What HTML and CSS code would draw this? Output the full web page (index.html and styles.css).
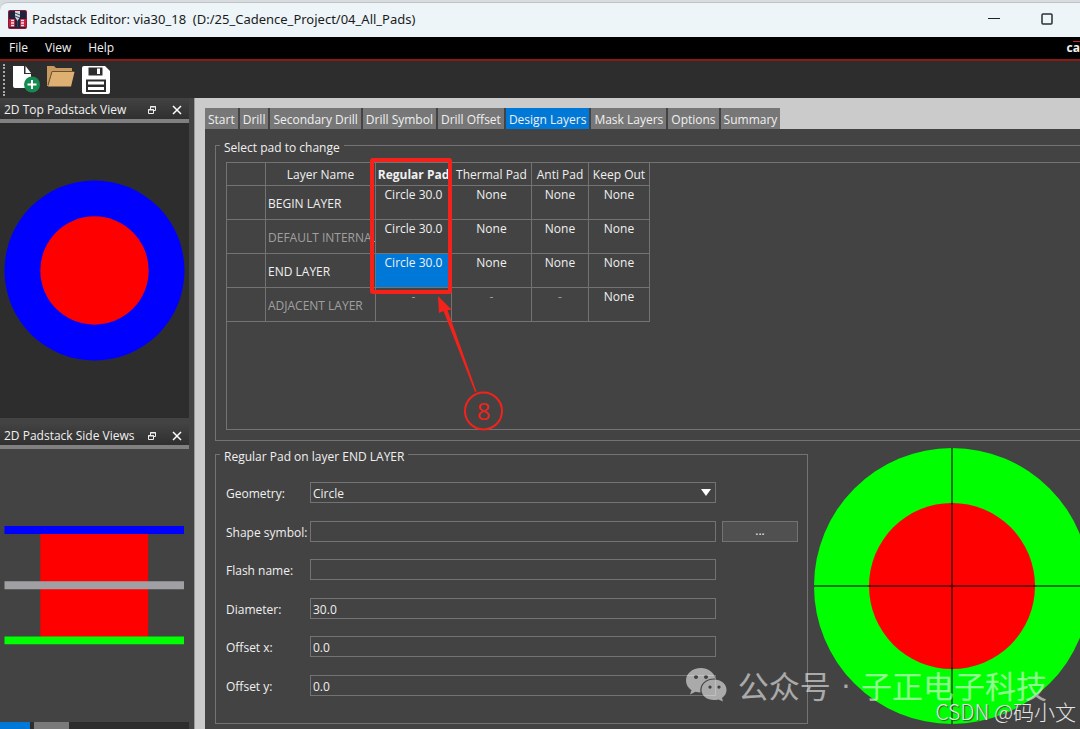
FILE: index.html
```html
<!DOCTYPE html>
<html lang="en">
<head>
  <meta charset="utf-8">
  <title>Padstack Editor</title>
  <link rel="stylesheet" href="styles.css">
</head>
<body>
  <div class="window">
    <header class="titlebar">
      <svg class="app-icon" width="19" height="19" viewBox="0 0 19 19">
        <rect width="19" height="19" rx="2" fill="#8d1c36"/>
        <rect x="1" y="1" width="17" height="17" rx="1" fill="#1c2440"/>
        <path d="M1 9h6v8H1zM12 9h6v8h-6z" fill="#c81e3c"/>
        <path d="M3 10.500h3M3 13h3M3 15.500h3M13 10.500h3M13 13h3M13 15.500h3" stroke="#f4e6ea" stroke-width="1.300"/>
        <path d="M7 1h5v6l-2.500 4L7 7z" fill="#cfd4da"/>
        <path d="M7 3l5 2M7 6l5 2M9.500 11v6" stroke="#3b4358"/>
      </svg>
      <h1>Padstack Editor: via30_18&nbsp; (D:/25_Cadence_Project/04_All_Pads)</h1>
      <div class="window-buttons">
        <button aria-label="Minimize"><svg width="12" height="12" viewBox="0 0 12 12"><path d="M0 5.500h12" stroke="#222"/></svg></button>
        <button aria-label="Maximize"><svg width="12" height="12" viewBox="0 0 12 12"><rect x="1" y="1" width="10" height="10" rx="1" fill="none" stroke="#2b2f36" stroke-width="1.500"/></svg></button>
      </div>
    </header>

    <nav class="menubar">
      <a href="#">File</a>
      <a href="#">View</a>
      <a href="#">Help</a>
      <span class="brand">c<span class="macron">a</span></span>
    </nav>

    <div class="toolbar">
      <span class="grip"></span>
      <button aria-label="New">
        <svg width="28" height="28" viewBox="0 0 28 28">
          <path d="M1 0h11v8h7v14H3q-2 0-2-2z" fill="#fff"/>
          <path d="M13.500 0l5.500 7h-5.500z" fill="#fff"/>
          <circle cx="20" cy="18.500" r="8" fill="#168a50"/>
          <path d="M20 14v9M15.500 18.500h9" stroke="#fff" stroke-width="2"/>
        </svg>
      </button>
      <button aria-label="Open">
        <svg width="28" height="28" viewBox="0 0 28 28">
          <path d="M0 20V0h7l2 2h16v4H5L1 20z" fill="#c99a5e"/>
          <path d="M5 6h22.500L24 20.500H1z" fill="#deb173"/>
          <path d="M1 19L5 5.500h22" fill="none" stroke="#6d5333"/>
        </svg>
      </button>
      <button aria-label="Save">
        <svg width="28" height="28" viewBox="0 0 28 28">
          <path d="M2 0h21l5 5v21q0 2-2 2H2q-2 0-2-2V2q0-2 2-2z" fill="#fff"/>
          <path d="M6.500 1.500h14v8h-14z" fill="#2d2d2d"/>
          <path d="M15 2.500h3v5.500h-3z" fill="#fff"/>
          <path d="M4 13.500h20V26H4z" fill="#2d2d2d"/>
          <path d="M6 15.500h16v3H6zM6 21h16v3H6z" fill="#fff"/>
        </svg>
      </button>
    </div>

    <div class="workspace">
      <aside class="docks">
        <section class="dock top-dock">
          <div class="dock-title">
            <h2>2D Top Padstack View</h2>
            <button aria-label="Float top view"><svg width="10" height="10" viewBox="0 0 10 10"><path d="M3.500 5V1.500h5v4H6M3 2h6M1.500 4.500h5v4h-5zM1 5h6" fill="none" stroke="#eee"/></svg></button>
            <button aria-label="Close top view"><svg width="10" height="10" viewBox="0 0 10 10"><path d="M1 1l8 8M9 1L1 9" stroke="#fff" stroke-width="1.500"/></svg></button>
          </div>
          <div class="dock-view dark">
            <svg viewBox="0 0 182 182">
              <circle cx="91" cy="91" r="90.500" fill="#00f"/>
              <circle cx="91" cy="91" r="54.500" fill="#f00"/>
            </svg>
          </div>
        </section>
        <section class="dock side-dock">
          <div class="dock-title">
            <h2>2D Padstack Side Views</h2>
            <button aria-label="Float side views"><svg width="10" height="10" viewBox="0 0 10 10"><path d="M3.500 5V1.500h5v4H6M3 2h6M1.500 4.500h5v4h-5zM1 5h6" fill="none" stroke="#eee"/></svg></button>
            <button aria-label="Close side views"><svg width="10" height="10" viewBox="0 0 10 10"><path d="M1 1l8 8M9 1L1 9" stroke="#fff" stroke-width="1.500"/></svg></button>
          </div>
          <div class="dock-view">
            <svg viewBox="0 0 182 120">
              <path d="M36.500 8h108.500v104H36.500z" fill="#f00"/>
              <path d="M.5 0H181v8H.5z" fill="#00f"/>
              <path d="M.5 55.500H181v8H.5z" fill="#a0a0a4"/>
              <path d="M.5 111H181v8H.5z" fill="#0f0"/>
            </svg>
          </div>
        </section>
        <div class="dock-tabs"><span class="on"></span><span></span></div>
      </aside>

      <main class="editor">
        <div class="tabs">
          <button>Start</button>
          <button>Drill</button>
          <button>Secondary Drill</button>
          <button>Drill Symbol</button>
          <button>Drill Offset</button>
          <button class="active">Design Layers</button>
          <button>Mask Layers</button>
          <button>Options</button>
          <button>Summary</button>
        </div>

        <div class="page">
          <fieldset class="group pads">
            <legend>Select pad to change</legend>
            <div class="pad-frame">
              <table>
                <colgroup>
                  <col class="c-mark"><col class="c-name"><col class="c-regular"><col class="c-thermal"><col class="c-anti"><col class="c-keep">
                </colgroup>
                <thead>
                  <tr><th></th><th>Layer Name</th><th class="current">Regular Pad</th><th>Thermal Pad</th><th>Anti Pad</th><th>Keep Out</th></tr>
                </thead>
                <tbody>
                  <tr><td></td><td class="name">BEGIN LAYER</td><td>Circle 30.0</td><td>None</td><td>None</td><td>None</td></tr>
                  <tr><td></td><td class="name dim">DEFAULT INTERNAL</td><td>Circle 30.0</td><td>None</td><td>None</td><td>None</td></tr>
                  <tr><td></td><td class="name">END LAYER</td><td class="selected">Circle 30.0</td><td>None</td><td>None</td><td>None</td></tr>
                  <tr><td></td><td class="name dim">ADJACENT LAYER</td><td class="dim">-</td><td class="dim">-</td><td class="dim">-</td><td>None</td></tr>
                </tbody>
              </table>
              <!-- step marker drawn over the table -->
              <svg class="callout" width="136" height="274" viewBox="0 0 136 274">
                <rect x="2" y="2" width="78" height="132" rx="1" fill="none" stroke="#f5221b" stroke-width="4"/>
                <path d="M68 138l14 14-4.500 0L106.500 233.500 105 234 73.500 153l-4.500 2z" fill="#f5221b"/>
                <circle cx="113.500" cy="253" r="18.500" fill="none" stroke="#f5221b" stroke-width="2"/>
                <text x="113.500" y="262" text-anchor="middle">8</text>
              </svg>
            </div>
          </fieldset>

          <div class="lower">
            <fieldset class="group details">
              <legend>Regular Pad on layer END LAYER</legend>
              <form class="fields">
                <label for="geometry">Geometry:</label>
                <div class="select-wrap">
                  <select id="geometry"><option>Circle</option></select>
                </div>
                <label for="shape">Shape symbol:</label>
                <input id="shape" type="text">
                <button type="button" class="browse" aria-label="Browse shape symbol">...</button>
                <label for="flash">Flash name:</label>
                <input id="flash" type="text">
                <label for="diameter">Diameter:</label>
                <input id="diameter" type="text" value="30.0">
                <label for="offset-x">Offset x:</label>
                <input id="offset-x" type="text" value="0.0">
                <label for="offset-y">Offset y:</label>
                <input id="offset-y" type="text" value="0.0">
              </form>
            </fieldset>
            <svg class="preview" width="276" height="276" viewBox="0 0 276 276">
              <circle cx="138" cy="138" r="138" fill="#0f0"/>
              <circle cx="138" cy="138" r="83" fill="#f00"/>
              <path d="M138 0v276M0 138h276" stroke="#000" stroke-opacity=".7" stroke-width="1.500"/>
            </svg>
          </div>
        </div>
      </main>
    </div>

    <div class="watermark">
      <svg width="42" height="34" viewBox="0 0 42 34">
        <path fill-rule="evenodd" d="M15 0C6.500 0 0 5.500 0 12.500c0 4 2 7.500 5.500 9.700L4 26.500l5.500-2.700c1.800.5 3.500.7 5 .7C13 16 20 10 29.500 10.500 28 4.500 22 0 15 0zM10 7a2 2 0 1 0 .01 0zM20 7a2 2 0 1 0 .01 0z"/>
        <path fill-rule="evenodd" d="M28 11.500c-7 0-12.500 4.500-12.500 10.500S21 32 28 32c1.500 0 3-.2 4.500-.6L37 33.500l-1-3.500c2.800-2 4.500-4.800 4.500-8 0-6-5.500-10.500-12.500-10.500zM24 17.500a1.600 1.600 0 1 0 .01 0zM33 17.500a1.600 1.600 0 1 0 .01 0z"/>
      </svg>
      <span>公众号</span>
      <span class="dot">·</span>
      <span>子正电子科技</span>
    </div>
    <div class="credit">CSDN @码小文</div>
  </div>
</body>
</html>
```
FILE: styles.css
```css
:root {
  --bg: #434343;
  --dark: #2d2d2d;
  --line: #737373;
  --frame: #cbcbcb;
  --accent: #0078d7;
  --text: #f0f0f0;
  --mark: #f5221b;
  --font: "Open Sans", "Segoe UI", sans-serif;
}
* {
  box-sizing: border-box;
}
body {
  margin: 0;
  font-family: var(--font);
  font-size: 12px;
  line-height: 16px;
  color: var(--text);
  background: #d9dcde;
  overflow: hidden;
}
h1, h2 {
  margin: 0;
  font-weight: normal;
}
button, input, select {
  font: inherit;
  color: inherit;
  margin: 0;
  border-radius: 0;
}
button {
  border: none;
  background: none;
  padding: 0;
}
.window {
  position: relative;
  height: 100vh;
  display: flex;
  flex-direction: column;
  overflow: hidden;
}

.titlebar {
  display: flex;
  align-items: center;
  height: 35px;
  margin-top: 2px;
  padding: 0 27px 2px 8px;
  gap: 5px;
  background: #edf5f8;
  border-top: 1px solid #c0c4c6;
  border-radius: 8px 0 0 0;
  color: #1b1b1b;
}
.titlebar h1 {
  font-family: "Noto Sans", "Segoe UI", sans-serif;
  font-size: 13px;
  flex: 1;
}
.window-buttons {
  display: flex;
  gap: 41px;
}
.window-buttons svg {
  display: block;
}

.menubar {
  display: flex;
  align-items: center;
  gap: 17px;
  height: 24px;
  padding-left: 9px;
  background: #000;
  border-bottom: 2px solid #8c1a14;
}
.menubar a {
  color: inherit;
  text-decoration: none;
}
.brand {
  margin-left: auto;
  line-height: 12px;
  padding-bottom: 2px;
  font-weight: bold;
}
.macron {
  display: inline-block;
  border-top: 1px solid #c81e3c;
}

.toolbar {
  display: flex;
  align-items: center;
  gap: 7px;
  height: 37px;
  padding: 0 3px;
  background: var(--dark);
}
.toolbar svg {
  display: block;
}
.grip {
  width: 2px;
  height: 32px;
  border-left: 2px dotted #aaa;
}

.workspace {
  flex: 1;
  min-height: 0;
  display: flex;
}
.docks {
  width: 194px;
  flex: none;
  padding-right: 5px;
  display: flex;
  flex-direction: column;
  background: var(--bg);
}
.dock {
  display: flex;
  flex-direction: column;
}
.top-dock {
  flex: 320;
  margin-bottom: 6px;
}
.side-dock {
  flex: 298;
}
.dock-title {
  display: flex;
  align-items: center;
  gap: 15px;
  height: 25px;
  padding: 2px 7px 0 4px;
  background: linear-gradient(#424242, #303030);
  border-bottom: 4px solid #808080;
}
.dock-title h2 {
  flex: 1;
  min-width: 0;
  font-size: 12px;
  white-space: nowrap;
}
.dock-title svg {
  display: block;
}
.dock-view {
  flex: 1;
  display: flex;
  align-items: center;
  padding: 0 4px;
}
.dock-view svg {
  width: 100%;
}
.dark {
  background: var(--dark);
}
.dock-tabs {
  display: flex;
  gap: 4px;
  height: 7px;
  background: var(--dark);
}
.dock-tabs span {
  width: 35px;
  background: #7a7a7a;
}
.dock-tabs .on {
  width: 30px;
  background: var(--accent);
}

.editor {
  flex: 1;
  min-width: 0;
  display: flex;
  flex-direction: column;
  background: var(--frame);
  border-left: 1px solid #999;
  padding: 10px 0 0 10px;
}
.tabs {
  display: flex;
  align-self: flex-start;
  gap: 2px;
  background: var(--bg);
}
.tabs button {
  height: 21px;
  padding: 2px 3px 0;
  background: #777;
}
.tabs .active {
  background: var(--accent);
}
.page {
  flex: 1;
  min-height: 0;
  display: flex;
  flex-direction: column;
  gap: 3px;
  padding: 6px 0 5px 10px;
  background: var(--bg);
}

.group {
  min-width: 0;
  margin: 0;
  border: 1px solid var(--line);
  padding: 6px 10px 10px;
}
.group legend {
  padding: 5px 4px 0;
  margin-left: -6px;
}
.pads {
  flex: 1;
  display: flex;
  flex-direction: column;
  margin-right: -12px;
}
.pad-frame {
  position: relative;
  flex: 1;
  border: 1px solid var(--line);
}
table {
  table-layout: fixed;
  width: 424px;
  margin: -1px;
  border-collapse: collapse;
}
.c-mark { width: 39px; }
.c-name { width: 110px; }
.c-regular { width: 76px; }
.c-thermal { width: 80px; }
.c-anti { width: 57px; }
.c-keep { width: 61px; }
th, td {
  border: 1px solid var(--line);
  padding: 0;
  text-align: center;
  white-space: nowrap;
}
th {
  height: 23px;
  padding-top: 2px;
  font-weight: normal;
}
th.current {
  font-weight: bold;
}
td {
  height: 34px;
  line-height: 18px;
  vertical-align: top;
}
td.name {
  text-align: left;
  vertical-align: middle;
  padding: 3px 0 0 2px;
  overflow: hidden;
}
.dim {
  color: #a0a0a0;
}
.selected {
  background: var(--accent);
}
.callout {
  position: absolute;
  left: 143px;
  top: -5px;
}
.callout text {
  font-size: 24px;
  fill: var(--mark);
}

.lower {
  display: flex;
  gap: 6px;
  margin-right: -10px;
}
.details {
  flex: 1;
  padding: 17px 9px 27px 10px;
}
.fields {
  display: grid;
  grid-template-columns: 78px 1fr 76px;
  column-gap: 6px;
  align-content: space-between;
  height: 214px;
}
.fields label {
  grid-column: 1;
  height: 21px;
  line-height: 24px;
  white-space: nowrap;
}
.fields input, .select-wrap {
  grid-column: 2;
}
.fields input, .fields select {
  width: 100%;
  height: 21px;
  min-width: 0;
  padding: 2px 2px 0;
  background: var(--bg);
  border: 1px solid var(--line);
  outline: none;
}
.fields select {
  display: block;
  appearance: none;
}
.select-wrap {
  position: relative;
}
.select-wrap::after {
  content: "";
  position: absolute;
  right: 5px;
  top: 7px;
  border: 5px solid transparent;
  border-top: 7px solid #fff;
  border-bottom: none;
  pointer-events: none;
}
.browse {
  height: 21px;
  background: #505050;
  border: 1px solid var(--line);
}
.preview {
  flex: none;
  margin-top: 4px;
  margin-bottom: -5px;
}

.watermark {
  position: absolute;
  right: 33px;
  bottom: 24px;
  display: flex;
  align-items: center;
  gap: 10px;
  font: 31px/40px "Noto Sans CJK SC", sans-serif;
  color: #fff;
  opacity: 0.55;
}
.watermark svg {
  fill: #fff;
}
.dot {
  font-family: "Liberation Sans", sans-serif;
}
.credit {
  position: absolute;
  right: 4px;
  bottom: 4px;
  font: 300 21px/28px "Noto Sans CJK SC", sans-serif;
  color: #e4e4e4;
  text-shadow: 1px 1px 1px #444;
}
```
